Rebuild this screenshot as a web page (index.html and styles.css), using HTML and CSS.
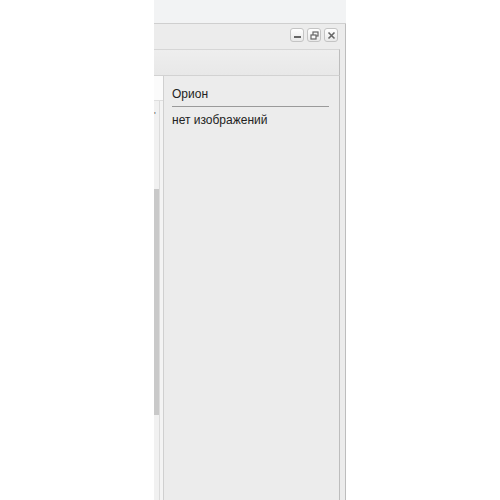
FILE: index.html
```html
<!DOCTYPE html>
<html lang="ru">
  <head>
    <meta charset="UTF-8" />
    <meta name="viewport" content="width=device-width, initial-scale=1.0" />
    <title>Орион</title>
    <link rel="stylesheet" href="styles.css">
  </head>
  <body>
    <div class="desk">
      <div class="blank"></div>
      <div class="win">
        <div class="strip"></div>
        <div class="titlebar">
          <span class="tbtn">
            <svg width="9" height="9" viewBox="0 0 9 9"><rect x="1" y="5" width="7" height="2" fill="#666"/></svg>
          </span>
          <span class="tbtn">
            <svg width="9" height="9" viewBox="0 0 9 9" fill="none" stroke="#666" stroke-width="1.2"><rect x="3" y="1" width="5" height="4"/><rect x="1" y="4" width="5" height="4" fill="#fafafa"/></svg>
          </span>
          <span class="tbtn">
            <svg width="9" height="9" viewBox="0 0 9 9" stroke="#666" stroke-width="1.6"><path d="M1.5 1.5l6 6M7.5 1.5l-6 6"/></svg>
          </span>
        </div>
        <div class="frame">
          <div class="toolbar"></div>
          <div class="main">
            <div class="side">
              <div class="side-head"></div>
              <div class="side-mark">'</div>
              <div class="scroll">
                <div class="thumb"></div>
              </div>
            </div>
            <div class="pane">
              <div class="name">Орион</div>
              <div class="empty">нет изображений</div>
            </div>
          </div>
        </div>
      </div>
    </div>
  </body>
</html>
```

FILE: styles.css
```css
body {
  margin: 0;
  background: #fff;
  font-family: "Liberation Sans", Arial, sans-serif;
}
.desk {
  display: flex;
  height: 500px;
  overflow: hidden;
}
.blank {
  width: 154px;
}
.win {
  width: 192px;
  display: flex;
  flex-direction: column;
}
.strip {
  height: 23px;
  background: #f2f3f4;
  border-bottom: 1px solid #cfcfcf;
}
.titlebar {
  height: 25px;
  background: #ececec;
  border-right: 1px solid #bdbdbd;
  display: flex;
  justify-content: flex-end;
  align-items: flex-start;
  gap: 3px;
  padding: 4px 7px 0 0;
  box-sizing: border-box;
}
.tbtn {
  width: 14px;
  height: 14px;
  box-sizing: border-box;
  border: 1px solid #c4c4c4;
  border-radius: 3px;
  background: linear-gradient(#ffffff, #e9e9e9);
  display: flex;
  align-items: center;
  justify-content: center;
}
.frame {
  flex: 1;
  display: flex;
  flex-direction: column;
  border-right: 5px solid #ececec;
  box-shadow: 1px 0 0 #bdbdbd;
  margin-right: 1px;
}
.toolbar {
  height: 27px;
  box-sizing: border-box;
  background: linear-gradient(#eeeeee, #e8e8e8);
  border-top: 1px solid #d6d6d6;
  border-bottom: 1px solid #d2d2d2;
  border-right: 1px solid #bdbdbd;
}
.main {
  flex: 1;
  display: flex;
  border-right: 1px solid #bdbdbd;
}
.side {
  width: 9px;
  display: flex;
  flex-direction: column;
  background: #f4f4f4;
  border-right: 1px solid #d0d0d0;
  position: relative;
}
.side-head {
  height: 24px;
  background: #fbfbfb;
  border-bottom: 1px solid #dedede;
}
.side-mark {
  position: absolute;
  left: 0;
  top: 34px;
  font-size: 9px;
  color: #555;
}
.scroll {
  width: 5px;
  flex: 1;
  padding-top: 88px;
  background: #f1f1f1;
  border-right: 1px solid #dcdcdc;
}
.thumb {
  height: 226px;
  background: #c9c9c9;
}
.pane {
  flex: 1;
  background: #ececec;
  padding: 9px 10px 0 8px;
  font-size: 12px;
  color: #222;
}
.name {
  padding: 2px 0 5px;
  border-bottom: 1px solid #9a9a9a;
}
.empty {
  padding-top: 6px;
}
```
